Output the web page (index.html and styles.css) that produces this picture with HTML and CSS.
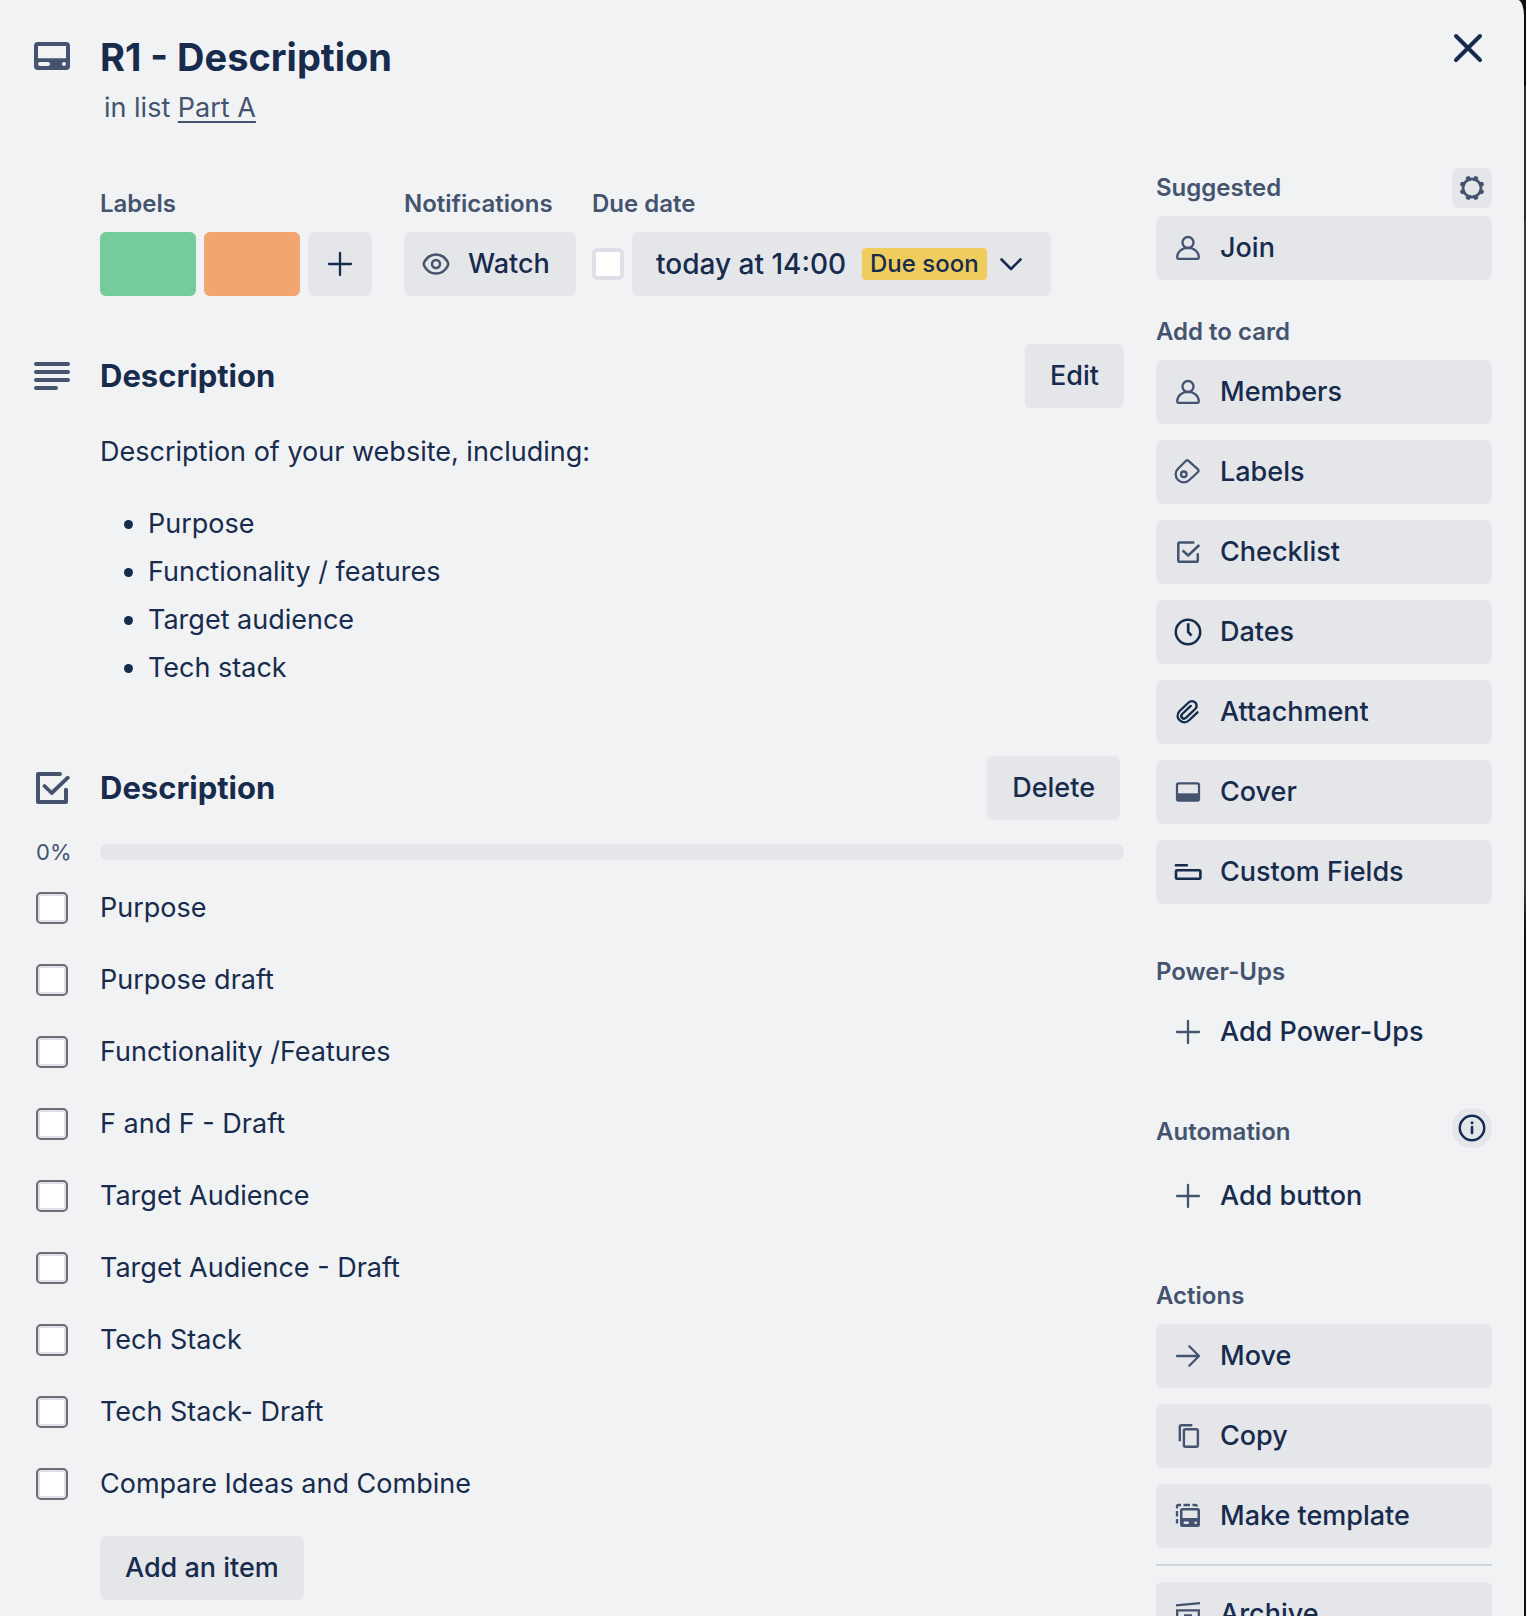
FILE: index.html
```html
<!DOCTYPE html>
<html lang="en">
<head>
<meta charset="utf-8">
<meta name="viewport" content="width=device-width, initial-scale=1">
<title>R1 - Description</title>
<link rel="stylesheet" href="styles.css">
</head>
<body>
<svg class="sprite" aria-hidden="true">
  <symbol id="i-member" viewBox="0 0 32 32"><g fill="none" stroke="currentColor" stroke-width="2.3" stroke-linejoin="round"><circle cx="16" cy="10.5" r="5.5"/><path d="M5.2 25.3C5.2 20 9.7 15.9 16 15.9S26.800 20 26.800 25.300a1.500 1.500 0 0 1-1.500 1.500H6.700a1.500 1.500 0 0 1-1.500-1.500Z"/></g></symbol>
  <symbol id="i-plus" viewBox="0 0 32 32"><path d="M16 5v22M5 16h22" fill="none" stroke="currentColor" stroke-width="2.300" stroke-linecap="round"/></symbol>
</svg>
<div class="card">
  <header class="card-header">
    <svg class="header-icon" width="36" height="28" viewBox="0 0 36 28" aria-hidden="true"><path fill="#44546f" fill-rule="evenodd" d="M4 0h28a4 4 0 0 1 4 4v20a4 4 0 0 1-4 4H4a4 4 0 0 1-4-4V4a4 4 0 0 1 4-4Zm0 4v12.300h28V4ZM6 20a2 2 0 0 0 0 4h8a2 2 0 0 0 0-4Zm24 0a2 2 0 1 0 0 4 2 2 0 0 0 0-4Z"/></svg>
    <div>
      <h1>R1 - Description</h1>
      <p class="in-list">in list <a href="#list">Part A</a></p>
    </div>
    <button class="close" type="button" aria-label="Close"><svg width="48" height="48" viewBox="0 0 48 48"><path d="M12 12l24 24M36 12L12 36" fill="none" stroke="currentColor" stroke-width="4" stroke-linecap="round"/></svg></button>
  </header>

  <div class="card-body">
    <main>
      <div class="details">
        <section>
          <h3 class="label">Labels</h3>
          <div class="row">
            <button class="swatch green" type="button" aria-label="Green label"></button>
            <button class="swatch orange" type="button" aria-label="Orange label"></button>
            <button class="btn square" type="button" aria-label="Add label"><svg class="icon"><use href="#i-plus"/></svg></button>
          </div>
        </section>
        <section>
          <h3 class="label">Notifications</h3>
          <button class="btn with-icon watch" type="button"><svg class="icon muted" viewBox="0 0 32 32"><g fill="none" stroke="currentColor" stroke-width="2.500"><path d="M16 6.500c5.500 0 9.300 3.300 11.500 7.200q1.300 2.300 0 4.600C25.300 22.200 21.500 25.500 16 25.500S6.700 22.200 4.500 18.300q-1.300-2.300 0-4.600C6.700 9.800 10.500 6.500 16 6.500Z"/><circle cx="16" cy="16" r="4"/></g></svg>Watch</button>
        </section>
        <section>
          <h3 class="label">Due date</h3>
          <div class="row">
            <input class="due-check" type="checkbox" aria-label="Mark due date complete">
            <button class="btn due" type="button">today at 14:00 <span class="badge">Due soon</span><svg class="icon" viewBox="0 0 32 32"><path d="M6.500 11.500l9.500 9.500 9.500-9.500" fill="none" stroke="currentColor" stroke-width="2.600" stroke-linecap="round" stroke-linejoin="round"/></svg></button>
          </div>
        </section>
      </div>

      <section class="description">
        <div class="section-head">
          <svg width="36" height="36" viewBox="0 0 36 36" aria-hidden="true"><path d="M2 6h32M2 14h32M2 22h32M2 30h20" stroke="currentColor" stroke-width="4" stroke-linecap="round"/></svg>
          <h2>Description</h2>
          <button class="btn" type="button">Edit</button>
        </div>
        <div class="prose">
          <p>Description of your website, including:</p>
          <ul>
            <li>Purpose</li>
            <li>Functionality / features</li>
            <li>Target audience</li>
            <li>Tech stack</li>
          </ul>
        </div>
      </section>

      <section class="checklist">
        <div class="section-head inset">
          <svg width="36" height="36" viewBox="0 0 36 36" aria-hidden="true"><g fill="none" stroke="currentColor" stroke-width="4" stroke-linecap="round" stroke-linejoin="round"><path d="M26 4H4v28h28V19.700"/><path d="M10.500 16l7.200 7L33.800 7.700" stroke-width="3.800"/></g></svg>
          <h2>Description</h2>
          <button class="btn" type="button">Delete</button>
        </div>
        <div class="progress"><span>0%</span><div class="track" role="progressbar" aria-label="Checklist progress" aria-valuenow="0" aria-valuemin="0" aria-valuemax="100"></div></div>
        <div class="items">
          <label><input type="checkbox"><span>Purpose</span></label>
          <label><input type="checkbox"><span>Purpose draft</span></label>
          <label><input type="checkbox"><span>Functionality /Features</span></label>
          <label><input type="checkbox"><span>F and F - Draft</span></label>
          <label><input type="checkbox"><span>Target Audience</span></label>
          <label><input type="checkbox"><span>Target Audience - Draft</span></label>
          <label><input type="checkbox"><span>Tech Stack</span></label>
          <label><input type="checkbox"><span>Tech Stack- Draft</span></label>
          <label><input type="checkbox"><span>Compare Ideas and Combine</span></label>
        </div>
        <button class="btn add-item" type="button">Add an item</button>
      </section>
    </main>

    <aside>
      <section>
        <div class="side-head"><h3 class="label">Suggested</h3><button class="mini" type="button" aria-label="Settings"><svg width="40" height="40" viewBox="0 0 40 40"><g fill="none" stroke="currentColor"><circle cx="20" cy="20" r="9" stroke-width="2.800"/><path stroke-width="4.800" stroke-linecap="round" d="M23.600 11l.2-.4M29 16.400l.4-.2M29 23.600l.4.2M23.600 29l.2.4M16.400 29l-.2.4M11 23.600l-.4.2M11 16.400l-.4-.2M16.400 11l-.2-.4"/></g><circle cx="20" cy="20" r="7.300" fill="#e4e6ea"/></svg></button></div>
        <button class="btn with-icon" type="button"><svg class="icon muted"><use href="#i-member"/></svg>Join</button>
      </section>

      <section class="after-small">
        <div class="side-head"><h3 class="label">Add to card</h3></div>
        <div class="stack">
          <button class="btn with-icon" type="button"><svg class="icon muted"><use href="#i-member"/></svg>Members</button>
          <button class="btn with-icon" type="button"><svg class="icon muted" viewBox="0 0 32 32"><g fill="none" stroke="currentColor" stroke-width="2.300"><path d="M6 12.700L14 4.800a1.800 1.800 0 0 1 2.500 0L26 13.400a1.800 1.800 0 0 1 0 2.600L17.400 24A8 8 0 1 1 6 12.700Z"/><circle cx="11.800" cy="18.300" r="2.800"/></g></svg>Labels</button>
          <button class="btn with-icon" type="button"><svg class="icon muted" viewBox="0 0 32 32"><g fill="none" stroke="currentColor" stroke-width="2.500" stroke-linejoin="round"><path d="M22.300 6.400H7.300a1 1 0 0 0-1 1v17.300a1 1 0 0 0 1 1h17.500a1 1 0 0 0 1-1v-7.500"/><path d="M10.600 14.500l5.600 5L27.300 9"/></g></svg>Checklist</button>
          <button class="btn with-icon" type="button"><svg class="icon" viewBox="0 0 32 32"><g fill="none" stroke="currentColor" stroke-width="2.500"><circle cx="16" cy="16" r="12.200"/><path d="M16.200 7.300V16l3.300 3.600" stroke-width="2.700"/></g></svg>Dates</button>
          <button class="btn with-icon" type="button"><svg class="icon" viewBox="0 0 32 32"><path d="M25.500 16.300l-8.700 8.200C11.300 29.700 1.500 22.300 7.400 15.200l9.200-8.700c4.200-3.900 11 1.600 6.600 6.500l-9.100 8.700c-2.900 2.600-6.500-1-3.900-3.700l8.600-8.100" fill="none" stroke="currentColor" stroke-width="2.400" stroke-linecap="round"/></svg>Attachment</button>
          <button class="btn with-icon" type="button"><svg class="icon muted" viewBox="0 0 32 32"><rect x="5" y="7.400" width="22" height="17.200" rx="1.500" fill="none" stroke="currentColor" stroke-width="2.200"/><path d="M5 17.300h22v7H5z" fill="currentColor"/></svg>Cover</button>
          <button class="btn with-icon" type="button"><svg class="icon" viewBox="0 0 32 32"><g fill="none" stroke="currentColor" stroke-width="2.600" stroke-linecap="round"><path d="M4 9.200h10.800"/><rect x="4" y="14.300" width="24.400" height="8.400" rx="1"/></g></svg>Custom Fields</button>
        </div>
      </section>

      <section class="after">
        <div class="side-head"><h3 class="label">Power-Ups</h3></div>
        <button class="btn with-icon plain" type="button"><svg class="icon muted"><use href="#i-plus"/></svg>Add Power-Ups</button>
      </section>

      <section class="automation">
        <div class="side-head"><h3 class="label">Automation</h3><button class="mini round" type="button" aria-label="About automation"><svg width="40" height="40" viewBox="0 0 40 40"><circle cx="20" cy="20" r="12.200" fill="none" stroke="currentColor" stroke-width="2.500"/><path d="M20 19v6" stroke="currentColor" stroke-width="2.600" stroke-linecap="round"/><circle cx="20" cy="14.700" r="1.500" fill="currentColor"/></svg></button></div>
        <button class="btn with-icon plain" type="button"><svg class="icon muted"><use href="#i-plus"/></svg>Add button</button>
      </section>

      <section class="after">
        <div class="side-head"><h3 class="label">Actions</h3></div>
        <div class="stack">
          <button class="btn with-icon" type="button"><svg class="icon muted" viewBox="0 0 32 32"><path d="M5 16h22M17.300 6.300L27 16l-9.700 9.700" fill="none" stroke="currentColor" stroke-width="2.300" stroke-linecap="round" stroke-linejoin="round"/></svg>Move</button>
          <button class="btn with-icon" type="button"><svg class="icon muted" viewBox="0 0 32 32"><g fill="none" stroke="currentColor" stroke-width="2.400"><path d="M20.300 5.200H9.300a1.500 1.500 0 0 0-1.500 1.500v14.500"/><rect x="11.900" y="9.200" width="14" height="17.600" rx="1.500"/></g></svg>Copy</button>
          <button class="btn with-icon" type="button"><svg class="icon muted" viewBox="0 0 32 32"><path d="M5 8.500V6.500A1.500 1.500 0 0 1 6.500 5h2.500M11.500 5h6.500M20.500 5h3a1.500 1.500 0 0 1 1.500 1.500M5 11v5.500M5 19v4.500" fill="none" stroke="currentColor" stroke-width="2.300"/><path fill="currentColor" fill-rule="evenodd" d="M10.300 8h15.400A2.300 2.300 0 0 1 28 10.300v14.400a2.300 2.300 0 0 1-2.300 2.300H10.300A2.300 2.300 0 0 1 8 24.700V10.300A2.300 2.300 0 0 1 10.300 8Zm.2 2.500V18h15v-7.500Zm2.200 11a1.200 1.200 0 0 0 0 2.500h3a1.200 1.200 0 0 0 0-2.500Zm11 0a1.200 1.200 0 1 0 0 2.500 1.200 1.200 0 0 0 0-2.500Z"/></svg>Make template</button>
        </div>
        <hr>
        <button class="btn with-icon" type="button"><svg class="icon muted" viewBox="0 0 32 32"><g fill="none" stroke="currentColor" stroke-width="2.300"><path d="M4 7.300L28 5.200M5.200 27.500V12.400h21.600v15.100ZM12 17.500h8"/></g></svg>Archive</button>
      </section>
    </aside>
  </div>
</div>
</body>
</html>
```
FILE: styles.css
```css
:root {
  --ink: #172b4d;
  --muted: #44546f;
  --surface: #f1f2f4;
  --button: #e4e6ea;
}

* { box-sizing: border-box; }

body {
  margin: 0;
  padding-right: 2px;
  background: linear-gradient(#0b0d08 86px, #26302c 86px 222px, #3c3c3a 222px 890px, #0a1210 930px);
  color: var(--ink);
  font: 400 27px/48px Inter, "Liberation Sans", sans-serif;
}

h1, h2, h3, p, ul { margin: 0; }

button {
  border: 0;
  padding: 0;
  font: inherit;
  color: inherit;
  background: none;
  cursor: pointer;
}

svg { display: block; flex: none; }
.sprite { display: none; }

/* Card window: scrolls inside the viewport */
.card {
  height: 100vh;
  overflow: hidden auto;
  scrollbar-width: none;
  padding: 0 32px;
  background: var(--surface);
  border-radius: 0 6px 0 0 / 0 16px 0 0;
}

.card-header {
  display: grid;
  grid-template-columns: 66px 1fr 48px;
  padding: 32px 0 44px 2px;
}
.header-icon { margin-top: 10px; }
h1 { font-size: 38px; font-weight: 700; line-height: 50px; }
.in-list { margin-top: 10px; padding-left: 4px; line-height: 32px; color: var(--muted); }
.in-list a { color: inherit; text-decoration-thickness: 2px; text-underline-offset: 4px; text-decoration-skip-ink: none; }
.close { height: 48px; margin-top: -8px; }

.card-body {
  display: grid;
  grid-template-columns: minmax(0, 1fr) 336px;
  gap: 32px;
}

.label { font-size: 24px; font-weight: 600; line-height: 40px; color: var(--muted); }

/* Buttons */
.btn {
  display: flex;
  align-items: center;
  height: 64px;
  padding: 0 25px;
  border-radius: 6px;
  background: var(--button);
  font-weight: 500;
  line-height: 40px;
  white-space: nowrap;
}
.with-icon { width: 100%; padding: 0 16px; gap: 16px; }
.watch { width: 172px; }
.square { padding: 0 16px; }
.due { padding: 0 24px; font-size: 28px; }
.plain { background: none; }
.icon { width: 32px; height: 32px; }
.muted { color: var(--muted); }

/* Labels, notifications, due date */
main { padding-top: 16px; }
.details { display: grid; grid-template-columns: 272px 172px auto; justify-content: start; column-gap: 32px; padding-left: 68px; }
.details section { display: flex; flex-direction: column; gap: 8px; }
.details section:nth-child(3) { margin-left: -16px; }
.row { display: flex; align-items: center; gap: 8px; }
.swatch { width: 96px; height: 64px; border-radius: 6px; }
.green { background: #74cc9c; }
.orange { background: #f2a66f; }
.badge {
  margin: 0 8px 0 16px;
  padding: 0 8px;
  border-radius: 4px;
  background: #eecd5e;
  font-size: 24px;
  line-height: 32px;
}

input[type="checkbox"] {
  appearance: none;
  flex: none;
  width: 32px;
  height: 32px;
  margin: 0;
  border: 2px solid #6c6c75;
  border-radius: 5px;
  background: #fff;
  box-shadow: inset 0 0 0 2px #dfdfe7;
}
input.due-check { border: 4px solid #dfdfe7; box-shadow: none; }

/* Sections */
.description { margin-top: 48px; }
.checklist { margin-top: 64px; }
.section-head {
  display: grid;
  grid-template-columns: 66px 1fr auto;
  align-items: center;
  padding-left: 2px;
  color: var(--muted);
}
.section-head.inset { padding-right: 4px; }
.section-head h2 { color: var(--ink); font-size: 31px; font-weight: 700; line-height: 40px; }
.section-head .btn { color: var(--ink); }

.prose { padding: 20px 0 0 68px; }
.prose ul { margin-top: 24px; padding-left: 48px; }

.progress { display: grid; grid-template-columns: 64px 1fr; align-items: center; margin-top: 24px; padding-left: 4px; height: 16px; }
.progress span { font-size: 22px; line-height: 16px; color: var(--muted); }
.track { height: 16px; border-radius: 8px; background: var(--button); }

.items { margin-top: 12px; }
.items label { display: flex; align-items: center; gap: 32px; height: 72px; padding-left: 4px; }
.add-item { margin: 16px 0 16px 68px; }

/* Sidebar */
.side-head { display: flex; justify-content: space-between; margin-bottom: 8px; }
.mini { width: 40px; height: 40px; border-radius: 8px; background: var(--button); color: var(--muted); }
.mini.round { border-radius: 50%; color: var(--ink); }
.stack { display: grid; gap: 16px; }
.after-small { margin-top: 32px; }
.after { margin-top: 48px; }
.automation { margin-top: 44px; }
.automation .side-head { height: 44px; margin-bottom: 12px; }
.automation .label { align-self: end; }
hr { height: 2px; margin: 16px 0; border: 0; background: #d0d4dc; }
```
